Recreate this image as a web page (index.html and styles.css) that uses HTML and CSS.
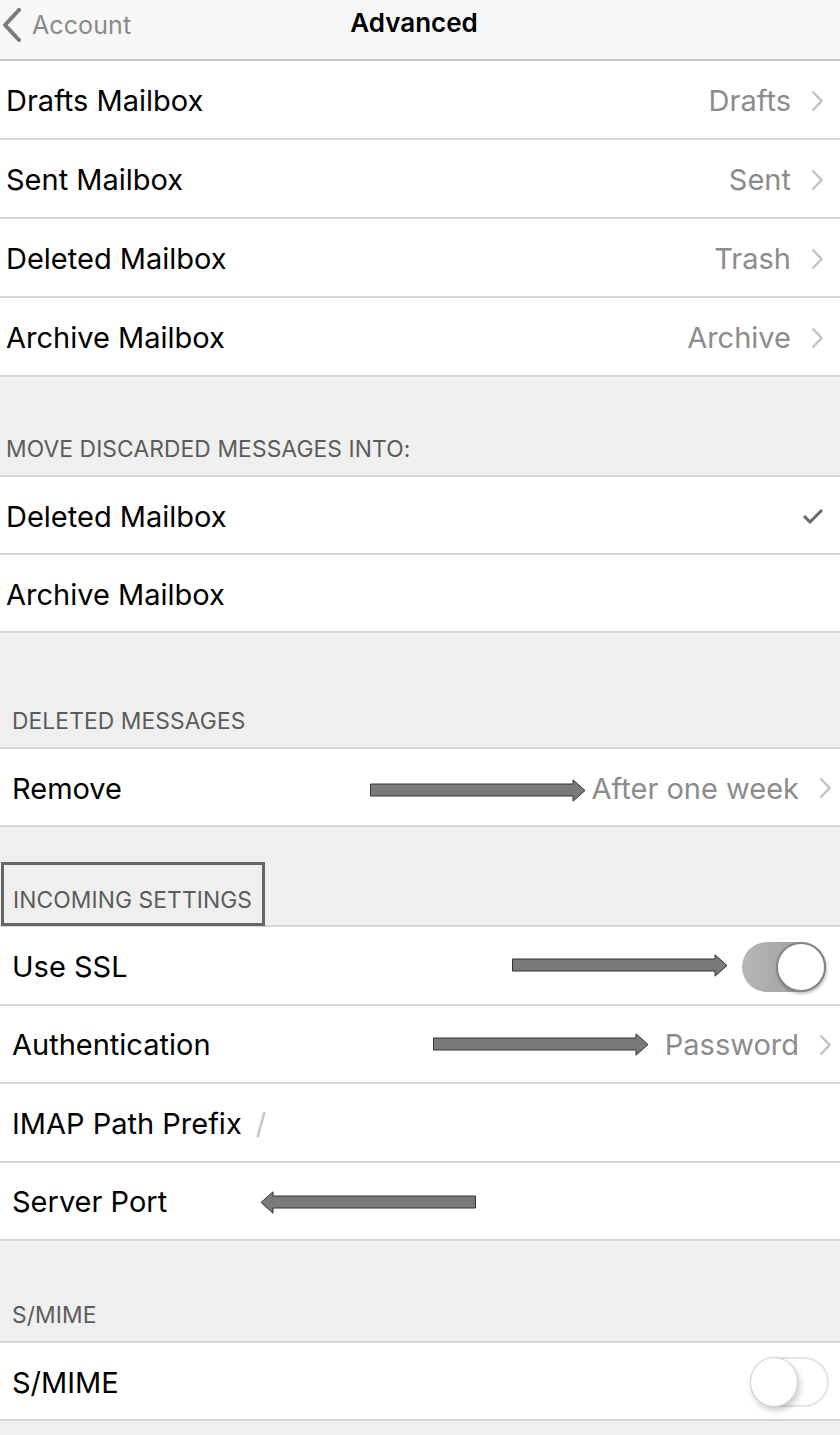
FILE: index.html
```html
<!DOCTYPE html>
<html>
<head>
<meta charset="utf-8">
<link rel="stylesheet" href="styles.css">
</head>
<body>
<div class="screen">
  <header class="nav">
    <div class="back">
      <svg class="back-chev" width="20" height="34" viewBox="0 0 20 34"><polyline points="17,2 3,17 17,32" fill="none" stroke="#7a7a7a" stroke-width="4" stroke-linecap="round" stroke-linejoin="round"/></svg>
      <span>Account</span>
    </div>
    <div class="title">Advanced</div>
  </header>

  <section class="group g1 first">
    <div class="row"><span class="label">Drafts Mailbox</span><span class="value">Drafts</span><svg class="chev" width="12" height="22" viewBox="0 0 12 22"><polyline points="1.5,1.5 10.5,11 1.5,20.5" fill="none" stroke="#c2c2c2" stroke-width="2.4"/></svg></div>
    <div class="row"><span class="label">Sent Mailbox</span><span class="value">Sent</span><svg class="chev" width="12" height="22" viewBox="0 0 12 22"><polyline points="1.5,1.5 10.5,11 1.5,20.5" fill="none" stroke="#c2c2c2" stroke-width="2.4"/></svg></div>
    <div class="row"><span class="label">Deleted Mailbox</span><span class="value">Trash</span><svg class="chev" width="12" height="22" viewBox="0 0 12 22"><polyline points="1.5,1.5 10.5,11 1.5,20.5" fill="none" stroke="#c2c2c2" stroke-width="2.4"/></svg></div>
    <div class="row"><span class="label">Archive Mailbox</span><span class="value">Archive</span><svg class="chev" width="12" height="22" viewBox="0 0 12 22"><polyline points="1.5,1.5 10.5,11 1.5,20.5" fill="none" stroke="#c2c2c2" stroke-width="2.4"/></svg></div>
  </section>

  <div class="section-head g1 h98"><span>MOVE DISCARDED MESSAGES INTO:</span></div>
  <section class="group g1">
    <div class="row"><span class="label">Deleted Mailbox</span><svg class="check" width="22" height="16" viewBox="0 0 22 16"><polyline points="2,8 8,14 20,2" fill="none" stroke="#6a6a6a" stroke-width="3"/></svg></div>
    <div class="row"><span class="label">Archive Mailbox</span></div>
  </section>

  <div class="section-head g2 h114"><span>DELETED MESSAGES</span></div>
  <section class="group g2">
    <div class="row">
      <span class="label">Remove</span><span class="value">After one week</span><svg class="chev" width="12" height="22" viewBox="0 0 12 22"><polyline points="1.5,1.5 10.5,11 1.5,20.5" fill="none" stroke="#c2c2c2" stroke-width="2.4"/></svg>
      <svg class="arrow a-remove" width="216" height="23" viewBox="0 0 216 23"><polygon points="0.5,5 203,5 203,0.8 215,11.5 203,22.2 203,17 0.5,17" fill="#7a7a7a" stroke="#333" stroke-width="1"/></svg>
    </div>
  </section>

  <div class="section-head g2 h98 boxed-wrap"><span class="boxed">INCOMING SETTINGS</span></div>
  <section class="group g2">
    <div class="row">
      <span class="label">Use SSL</span>
      <span class="toggle on"><span class="knob"></span></span>
      <svg class="arrow a-ssl" width="216" height="23" viewBox="0 0 216 23"><polygon points="0.5,5 203,5 203,0.8 215,11.5 203,22.2 203,17 0.5,17" fill="#7a7a7a" stroke="#333" stroke-width="1"/></svg>
    </div>
    <div class="row">
      <span class="label">Authentication</span><span class="value">Password</span><svg class="chev" width="12" height="22" viewBox="0 0 12 22"><polyline points="1.5,1.5 10.5,11 1.5,20.5" fill="none" stroke="#c2c2c2" stroke-width="2.4"/></svg>
      <svg class="arrow a-auth" width="216" height="23" viewBox="0 0 216 23"><polygon points="0.5,5 203,5 203,0.8 215,11.5 203,22.2 203,17 0.5,17" fill="#7a7a7a" stroke="#333" stroke-width="1"/></svg>
    </div>
    <div class="row"><span class="label">IMAP Path Prefix</span><span class="slash">/</span></div>
    <div class="row">
      <span class="label">Server Port</span>
      <svg class="arrow a-port" width="216" height="23" viewBox="0 0 216 23"><polygon points="215.5,5 13,5 13,0.8 1,11.5 13,22.2 13,17 215.5,17" fill="#7a7a7a" stroke="#333" stroke-width="1"/></svg>
    </div>
  </section>

  <div class="section-head g2 h99"><span>S/MIME</span></div>
  <section class="group g2">
    <div class="row"><span class="label">S/MIME</span><span class="toggle off"><span class="knob"></span></span></div>
  </section>
</div>
</body>
</html>
```

FILE: styles.css
```css
* { box-sizing: border-box; }
html, body { margin: 0; padding: 0; }
body {
  background: #efefef;
  font-family: Inter, "Noto Sans", "Liberation Sans", sans-serif;
  width: 840px;
  height: 1435px;
  overflow: hidden;
}
.screen { width: 840px; }

.nav {
  height: 61px;
  background: #f7f7f7;
  border-bottom: 2px solid #c4c4c4;
  display: flex;
  align-items: center;
  position: relative;
  padding-bottom: 10px;
}
.back {
  display: flex;
  align-items: center;
  gap: 10px;
  padding-left: 2px;
  color: #8a8a8a;
  font-size: 25px;
  letter-spacing: 0.1px;
}
.title {
  position: absolute;
  left: 0;
  right: 12px;
  top: 7px;
  text-align: center;
  font-size: 26px;
  font-weight: 600;
  color: #000;
}

.group {
  background: #fff;
  border-top: 2px solid #d6d6d6;
}
.group.first { border-top: none; }
.row {
  position: relative;
  height: 78px;
  display: flex;
  align-items: center;
  border-bottom: 2px solid #d6d6d6;
  font-size: 29px;
  color: #000;
  padding-top: 2px;
}
.first .row { height: 79px; }
.g1 .row { padding-left: 6px; padding-right: 17px; }
.g2 .row { height: 78.4px; padding-left: 12px; padding-right: 9px; }
.label { flex: none; }
.value {
  margin-left: auto;
  color: #8c8c8c;
  margin-right: 20px;
}
.chev { flex: none; }
.check { margin-left: auto; margin-right: -1px; }
.slash {
  color: #c4c4c4;
  margin-left: 14px;
  font-size: 29px;
}

.section-head {
  display: flex;
  align-items: flex-end;
  font-size: 22.8px;
  color: #5c5c5c;
  padding-bottom: 13px;
  letter-spacing: 0.1px;
}
.section-head.g1 { padding-left: 6px; }
.section-head.g2 { padding-left: 12px; }
.h98 { height: 98px; }
.h99 { height: 100px; }
.h114 { height: 114px; }
.boxed-wrap { padding-left: 1px !important; padding-bottom: 0; }
.boxed {
  display: block;
  border: 3px solid #666;
  padding: 21px 10px 5px 9px;
  height: 64px;
  margin-bottom: -1px;
}

.arrow { position: absolute; }
.a-remove { left: 370px; top: 30px; }
.a-ssl { left: 512px; top: 27px; }
.a-auth { left: 433px; top: 27px; }
.a-port { left: 260px; top: 28px; }

.toggle {
  margin-left: auto;
  position: relative;
  display: block;
  border-radius: 26px;
  flex: none;
}
.toggle.on {
  width: 84px;
  height: 50px;
  margin-right: 5px;
  background: linear-gradient(to right, #b6b6b6, #999);
}
.toggle.on .knob {
  position: absolute;
  right: 0;
  top: 0;
  width: 50px;
  height: 50px;
  border-radius: 50%;
  background: #fff;
  border: 2px solid #858585;
  box-shadow: 1px 2px 3px rgba(0,0,0,0.25);
}
.toggle.off {
  width: 79px;
  height: 50px;
  margin-right: 2px;
  background: #fff;
  border: 2px solid #e4e4e4;
}
.toggle.off .knob {
  position: absolute;
  left: -2px;
  top: -2px;
  width: 48px;
  height: 50px;
  border-radius: 50%;
  background: #fff;
  border: 1px solid #d0d0d0;
  box-shadow: 2px 4px 6px rgba(0,0,0,0.2);
}
```
